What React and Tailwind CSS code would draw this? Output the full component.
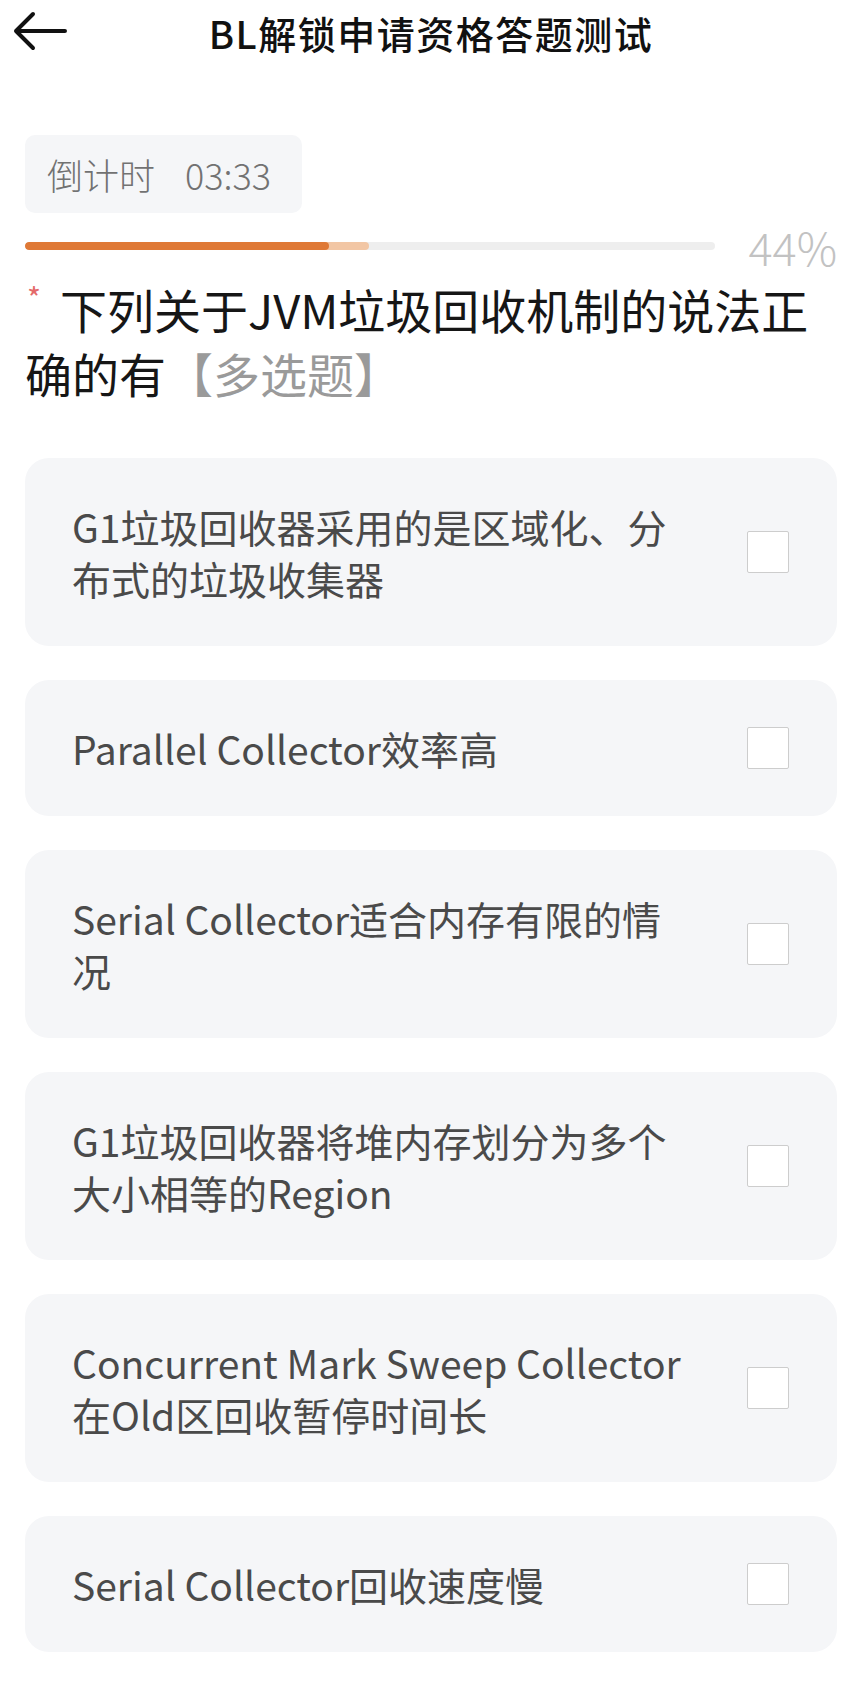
import React from 'react';

const FONT = { fontFamily: '"Noto Sans CJK SC", "Noto Sans", sans-serif' };

const options = [
  { id: 1, lines: ['G1垃圾回收器采用的是区域化、分', '布式的垃圾收集器'] },
  { id: 2, lines: ['Parallel Collector效率高'] },
  { id: 3, lines: ['Serial Collector适合内存有限的情', '况'] },
  { id: 4, lines: ['G1垃圾回收器将堆内存划分为多个', '大小相等的Region'] },
  { id: 5, lines: ['Concurrent Mark Sweep Collector', '在Old区回收暂停时间长'] },
  { id: 6, lines: ['Serial Collector回收速度慢'] },
];

function BackArrow() {
  return (
    <svg width="56" height="40" viewBox="0 0 56 40" fill="none">
      <path d="M20 3 L3 20 L20 37 M3 20 H52" stroke="#111" strokeWidth="4" strokeLinecap="round" strokeLinejoin="round" />
    </svg>
  );
}

function OptionCard({ lines }) {
  return (
    <div className="flex items-center justify-between rounded-[24px] bg-[#f5f6f8] pl-[47px] pr-[48px] py-[42px]">
      <div className="text-[39px] leading-[52px] text-[#4a4a4a]">
        {lines.map((l, i) => (
          <div key={i}>{l}</div>
        ))}
      </div>
      <div className="w-[42px] h-[42px] shrink-0 bg-white border-[1.5px] border-[#cdcdcd] rounded-[2px]" />
    </div>
  );
}

export default function App() {
  return (
    <div className="w-[868px] h-[1692px] bg-white overflow-hidden" style={FONT}>
      {/* header */}
      <div className="grid grid-cols-[80px_1fr_80px] items-center h-[64px]">
        <div className="pl-[13px] pb-[2px]">
          <BackArrow />
        </div>
        <h1 className="text-center text-[38px] font-medium text-[#111] tracking-[1.5px] pr-[6px]">BL解锁申请资格答题测试</h1>
        <div />
      </div>

      <div className="pl-[25px] pr-[31px]">
        {/* countdown */}
        <div className="mt-[71px] w-[277px] h-[78px] rounded-[10px] bg-[#f5f6f8] flex items-center pl-[22px] text-[36px] font-light text-[#727272]">
          <span>倒计时</span>
          <span className="ml-[30px]">03:33</span>
        </div>

        {/* progress */}
        <div className="mt-[11px] h-[44px] flex items-center">
          <div className="relative w-[690px] h-[8px] rounded-full bg-[#eeeeee] overflow-hidden">
            <div className="absolute left-0 top-0 h-full w-[344px] rounded-full bg-[#f2c6a4]" />
            <div className="absolute left-0 top-0 h-full w-[304px] rounded-full bg-[#df7936]" />
          </div>
          <div className="flex-1 text-right text-[45px] font-light text-[#c2c2c2] leading-none">44%</div>
        </div>

        {/* question */}
        <div className="mt-[9px] text-[47px] text-[#161616]">
          <div className="flex items-start h-[64px]">
            <span className="text-[30px] leading-[40px] text-[#e46a6a] ml-[2px] mr-[19px]">*</span>
            <span className="leading-[64px] whitespace-nowrap">下列关于JVM垃圾回收机制的说法正</span>
          </div>
          <div className="flex h-[64px]">
            <span className="leading-[64px]">确的有</span>
            <span className="leading-[64px] text-[#9a9a9a]">【多选题】</span>
          </div>
        </div>

        {/* options */}
        <div className="mt-[53px] flex flex-col gap-[34px]">
          {options.map(o => (
            <OptionCard key={o.id} lines={o.lines} />
          ))}
        </div>
      </div>
    </div>
  );
}
